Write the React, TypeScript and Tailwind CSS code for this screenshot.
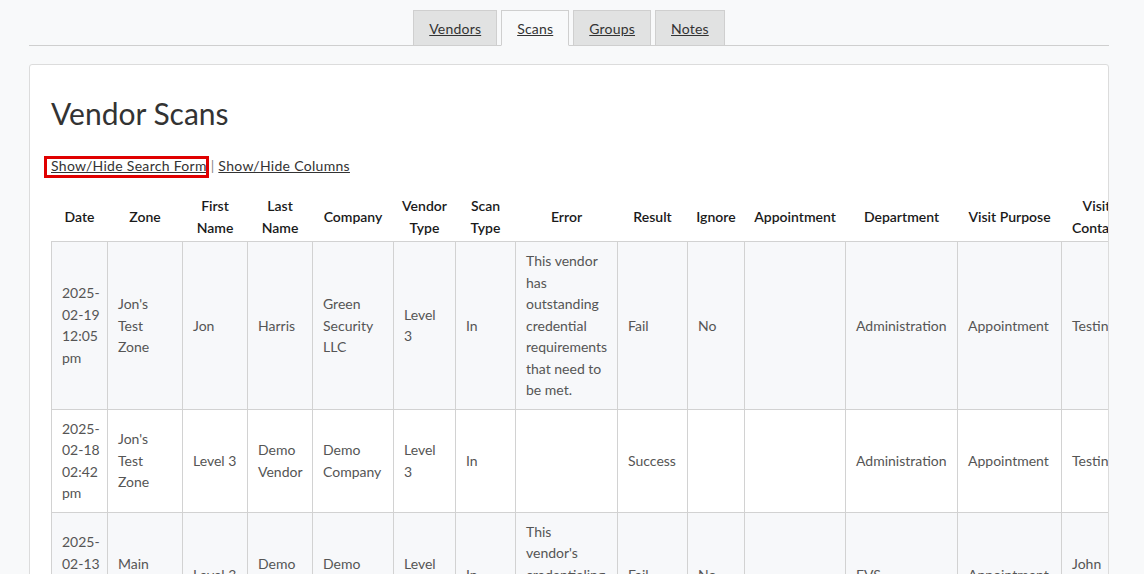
import React from "react";

const tabs = ["Vendors", "Scans", "Groups", "Notes"];

const cols: { h: string[]; w: number }[] = [
  { h: ["Date"], w: 56 },
  { h: ["Zone"], w: 75 },
  { h: ["First", "Name"], w: 65 },
  { h: ["Last", "Name"], w: 65 },
  { h: ["Company"], w: 81 },
  { h: ["Vendor", "Type"], w: 62 },
  { h: ["Scan", "Type"], w: 60 },
  { h: ["Error"], w: 102 },
  { h: ["Result"], w: 70 },
  { h: ["Ignore"], w: 57 },
  { h: ["Appointment"], w: 101 },
  { h: ["Department"], w: 112 },
  { h: ["Visit Purpose"], w: 104 },
  { h: ["Visit", "Contact"], w: 70 },
];

const rows: string[][][] = [
  [
    ["2025-", "02-19", "12:05", "pm"],
    ["Jon's", "Test", "Zone"],
    ["Jon"],
    ["Harris"],
    ["Green", "Security", "LLC"],
    ["Level", "3"],
    ["In"],
    ["This vendor", "has", "outstanding", "credential", "requirements", "that need to", "be met."],
    ["Fail"],
    ["No"],
    [],
    ["Administration"],
    ["Appointment"],
    ["Testing"],
  ],
  [
    ["2025-", "02-18", "02:42", "pm"],
    ["Jon's", "Test", "Zone"],
    ["Level 3"],
    ["Demo", "Vendor"],
    ["Demo", "Company"],
    ["Level", "3"],
    ["In"],
    [],
    ["Success"],
    [],
    [],
    ["Administration"],
    ["Appointment"],
    ["Testing"],
  ],
  [
    ["2025-", "02-13", "10:21", "am"],
    ["Main", "Entrance"],
    ["Level 3"],
    ["Demo", "Vendor"],
    ["Demo", "Company"],
    ["Level", "3"],
    ["In"],
    ["This", "vendor's", "credentialing", "requirements", "have expired."],
    ["Fail"],
    ["No"],
    [],
    ["EVS"],
    ["Appointment"],
    ["John", "Smith"],
  ],
];

function Lines({ lines }: { lines: string[] }) {
  return (
    <>
      {lines.map((l, i) => (
        <React.Fragment key={i}>
          {i > 0 && <br />}
          {l}
        </React.Fragment>
      ))}
    </>
  );
}

export default function App() {
  return (
    <div className="min-h-[574px] bg-[#f8f9fa] pt-[10px] font-['Lato','Open_Sans',sans-serif] text-[#333]">
      <div className="ml-[29px] w-[1080px]">
        <div className="flex justify-center gap-[4px] border-b border-[#cfcfcf]">
          {tabs.map((t) => (
            <div
              key={t}
              className={
                t === "Scans"
                  ? "-mb-px flex h-[36px] items-center border border-[#cfcfcf] border-b-[#f8f9fa] bg-[#f8f9fa] px-[15px] text-[14px] tracking-[0.2px] underline"
                  : "-mb-px flex h-[36px] items-center border border-[#cfcfcf] bg-[#e1e2e2] px-[15px] text-[14px] tracking-[0.2px] underline"
              }
            >
              {t}
            </div>
          ))}
        </div>

        <div className="mt-[18px] overflow-hidden rounded-[3px] border border-[#dcdcdc] bg-white pl-[21px] pr-[20px] pt-[30px] pb-[40px]">
          <h1 className="text-[30px] leading-[36px] text-[#333]">Vendor Scans</h1>
          <div className="mt-[24px] text-[14px] leading-[21px] tracking-[0.3px]">
            <span className="relative">
              <a className="underline">Show/Hide Search Form</a>
              <span className="pointer-events-none absolute -left-[7px] -right-[2px] -top-[1px] -bottom-[4px] border-[3px] border-[#e00000]" />
            </span>
            <span className="text-[#888]"> | </span>
            <a className="underline">Show/Hide Columns</a>
          </div>

          <table className="mt-[17px] w-[1080px] table-fixed border-collapse text-[14px]">
            <colgroup>
              {cols.map((c, i) => (
                <col key={i} style={{ width: c.w }} />
              ))}
            </colgroup>
            <thead>
              <tr>
                {cols.map((c, i) => (
                  <th
                    key={i}
                    className="whitespace-nowrap px-[4px] py-[2px] text-center align-middle font-semibold leading-[22px] text-[#1a1a1a]"
                  >
                    <Lines lines={c.h} />
                  </th>
                ))}
              </tr>
            </thead>
            <tbody>
              {rows.map((r, ri) => (
                <tr key={ri} className={ri % 2 === 0 ? "bg-[#f7f8fa]" : "bg-white"}>
                  {r.map((cell, ci) => (
                    <td
                      key={ci}
                      className="whitespace-nowrap border border-[#d2d2d2] px-[10px] py-[8px] text-left align-middle leading-[21.5px] text-[#555]"
                    >
                      <Lines lines={cell} />
                    </td>
                  ))}
                </tr>
              ))}
            </tbody>
          </table>
        </div>
      </div>
    </div>
  );
}
